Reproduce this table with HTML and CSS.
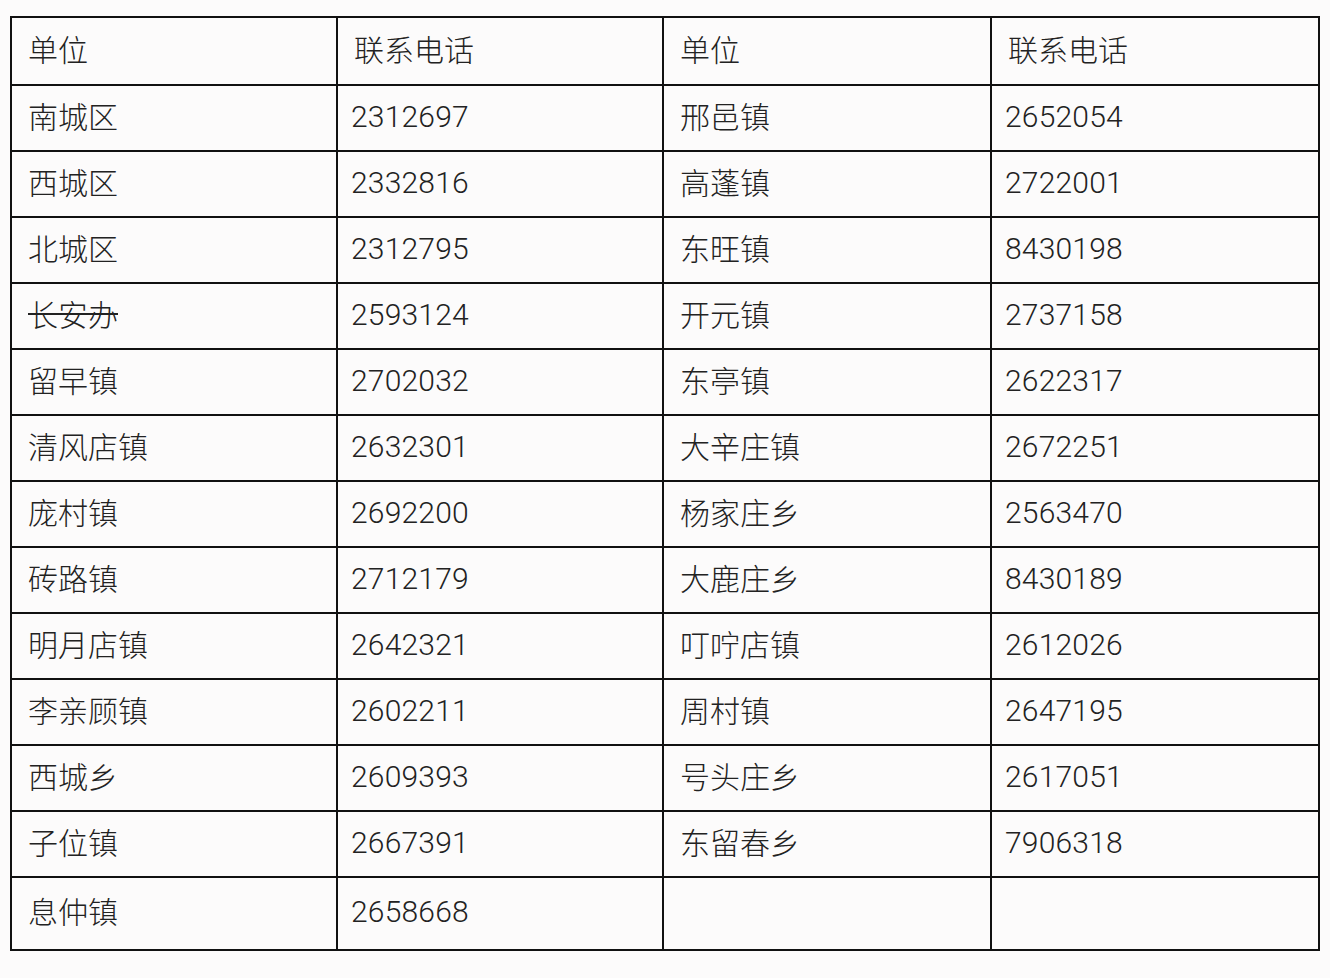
FILE: index.html
```html
<!DOCTYPE html>
<html lang="zh-CN">
<head>
<meta charset="utf-8">
<title>联系电话</title>
<link rel="stylesheet" href="styles.css">
</head>
<body>
<div class="sheet">
  <div class="grid">
    <div class="cell head">单位</div><div class="cell head">联系电话</div><div class="cell head">单位</div><div class="cell head">联系电话</div>
    <div class="cell">南城区</div><div class="cell num">2312697</div><div class="cell">邢邑镇</div><div class="cell num">2652054</div>
    <div class="cell">西城区</div><div class="cell num">2332816</div><div class="cell">高蓬镇</div><div class="cell num">2722001</div>
    <div class="cell">北城区</div><div class="cell num">2312795</div><div class="cell">东旺镇</div><div class="cell num">8430198</div>
    <div class="cell"><span class="struck">长安办</span></div><div class="cell num">2593124</div><div class="cell">开元镇</div><div class="cell num">2737158</div>
    <div class="cell">留早镇</div><div class="cell num">2702032</div><div class="cell">东亭镇</div><div class="cell num">2622317</div>
    <div class="cell">清风店镇</div><div class="cell num">2632301</div><div class="cell">大辛庄镇</div><div class="cell num">2672251</div>
    <div class="cell">庞村镇</div><div class="cell num">2692200</div><div class="cell">杨家庄乡</div><div class="cell num">2563470</div>
    <div class="cell">砖路镇</div><div class="cell num">2712179</div><div class="cell">大鹿庄乡</div><div class="cell num">8430189</div>
    <div class="cell">明月店镇</div><div class="cell num">2642321</div><div class="cell">叮咛店镇</div><div class="cell num">2612026</div>
    <div class="cell">李亲顾镇</div><div class="cell num">2602211</div><div class="cell">周村镇</div><div class="cell num">2647195</div>
    <div class="cell">西城乡</div><div class="cell num">2609393</div><div class="cell">号头庄乡</div><div class="cell num">2617051</div>
    <div class="cell">子位镇</div><div class="cell num">2667391</div><div class="cell">东留春乡</div><div class="cell num">7906318</div>
    <div class="cell">息仲镇</div><div class="cell num">2658668</div><div class="cell"></div><div class="cell"></div>
  </div>
</div>
</body>
</html>
```
FILE: styles.css
```css
html, body {
  margin: 0;
  padding: 0;
  background: #fcfbfb;
}
.sheet {
  padding: 16px 10px 0 10px;
}
.grid {
  display: grid;
  width: max-content;
  grid-template-columns: 324px 324px 326px 326px;
  grid-template-rows: 66px repeat(12, 64px) 71px;
  gap: 2px;
  padding: 2px;
  background: #111;
}
.cell {
  background: #fcfbfb;
  display: flex;
  align-items: center;
  padding: 0 0 7px 16px;
  font-family: "Noto Sans CJK SC", "Liberation Sans", sans-serif;
  font-weight: 300;
  font-size: 30px;
  color: #222;
}
.cell.num {
  font-family: Roboto, "Liberation Sans", "Noto Sans CJK SC", sans-serif;
  font-weight: 300;
  font-size: 30px;
  letter-spacing: 0.2px;
  padding-left: 13px;
  padding-bottom: 4px;
  color: #222;
}
.struck {
  text-decoration: line-through;
  text-decoration-thickness: 1.5px;
}
```
